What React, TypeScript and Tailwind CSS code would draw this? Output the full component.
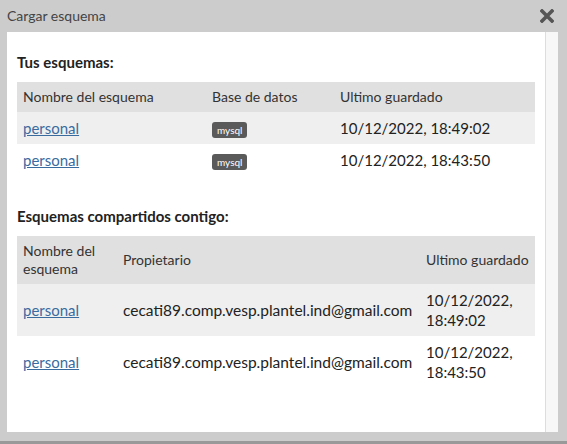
const misEsquemas = [
  { nombre: 'personal', db: 'mysql', guardado: '10/12/2022, 18:49:02' },
  { nombre: 'personal', db: 'mysql', guardado: '10/12/2022, 18:43:50' },
];

const compartidos = [
  { nombre: 'personal', propietario: 'cecati89.comp.vesp.plantel.ind@gmail.com', guardado: ['10/12/2022,', '18:49:02'] },
  { nombre: 'personal', propietario: 'cecati89.comp.vesp.plantel.ind@gmail.com', guardado: ['10/12/2022,', '18:43:50'] },
];

const CloseIcon = () => (
  <svg width="14" height="14" viewBox="0 0 14 14">
    <path d="M2 2 L12 12 M12 2 L2 12" stroke="#555" strokeWidth="3.6" strokeLinecap="square" />
  </svg>
);

const App = () => {
  return (
    <div className="w-[567px] h-[444px] bg-[#cccccc] flex flex-col font-['Lato','Liberation_Sans',sans-serif] text-[#222]">
      <div className="h-[32px] flex items-center justify-between pl-[7px] pr-[13px] shrink-0">
        <span className="text-[14px] text-[#444] -mt-[1px]">Cargar esquema</span>
        <CloseIcon />
      </div>
      <div className="flex h-[400px] ml-[7px] mr-[9px]">
        <div className="flex-1 bg-white pl-[10px] pr-[10px]">
          <h3 className="mt-[20px] text-[15px] leading-[20px] font-bold">Tus esquemas:</h3>
          <table className="mt-[10px] w-[518px] table-fixed border-collapse">
            <colgroup>
              <col className="w-[189px]" />
              <col className="w-[128px]" />
              <col className="w-[201px]" />
            </colgroup>
            <thead>
              <tr className="bg-[#e0e0e0] text-left text-[14px] leading-[18px] text-[#333]">
                <th className="font-normal px-[6px] py-[6px]">Nombre del esquema</th>
                <th className="font-normal px-[6px] py-[6px]">Base de datos</th>
                <th className="font-normal px-[6px] py-[6px]">Ultimo guardado</th>
              </tr>
            </thead>
            <tbody>
              {misEsquemas.map((e, i) => (
                <tr key={i} className={`text-[15px] leading-[20px] ${i % 2 === 0 ? 'bg-[#efefef]' : 'bg-white'}`}>
                  <td className="px-[6px] py-[6px]">
                    <a href="#" className="text-[#3a6b9f] underline">{e.nombre}</a>
                  </td>
                  <td className="px-[6px] py-[6px]">
                    <span className="inline-block align-middle bg-[#5a5a5a] text-white text-[10px] leading-[16px] px-[5px] rounded-[3px]">{e.db}</span>
                  </td>
                  <td className="px-[6px] py-[6px]">{e.guardado}</td>
                </tr>
              ))}
            </tbody>
          </table>

          <h3 className="mt-[30px] text-[15px] leading-[20px] font-bold">Esquemas compartidos contigo:</h3>
          <table className="mt-[10px] w-[518px] table-fixed border-collapse">
            <colgroup>
              <col className="w-[100px]" />
              <col className="w-[303px]" />
              <col className="w-[115px]" />
            </colgroup>
            <thead>
              <tr className="bg-[#e0e0e0] text-left text-[14px] leading-[18px] text-[#333]">
                <th className="font-normal px-[6px] py-[6px]">Nombre del esquema</th>
                <th className="font-normal px-[6px] py-[6px]">Propietario</th>
                <th className="font-normal px-[6px] py-[6px]">Ultimo guardado</th>
              </tr>
            </thead>
            <tbody>
              {compartidos.map((e, i) => (
                <tr key={i} className={`text-[15px] leading-[20px] ${i % 2 === 0 ? 'bg-[#efefef]' : 'bg-white'}`}>
                  <td className="px-[6px] py-[6px]">
                    <a href="#" className="text-[#3a6b9f] underline">{e.nombre}</a>
                  </td>
                  <td className="px-[6px] py-[6px] whitespace-nowrap text-[15.5px]">{e.propietario}</td>
                  <td className="px-[6px] py-[6px]">
                    {e.guardado[0]}
                    <br />
                    {e.guardado[1]}
                  </td>
                </tr>
              ))}
            </tbody>
          </table>
        </div>
        <div className="w-[13px] bg-[#f7f7f7] border-l border-[#dddddd]" />
      </div>
      <div className="mt-auto h-[3px] bg-[#999999]" />
    </div>
  );
};

export default App;
